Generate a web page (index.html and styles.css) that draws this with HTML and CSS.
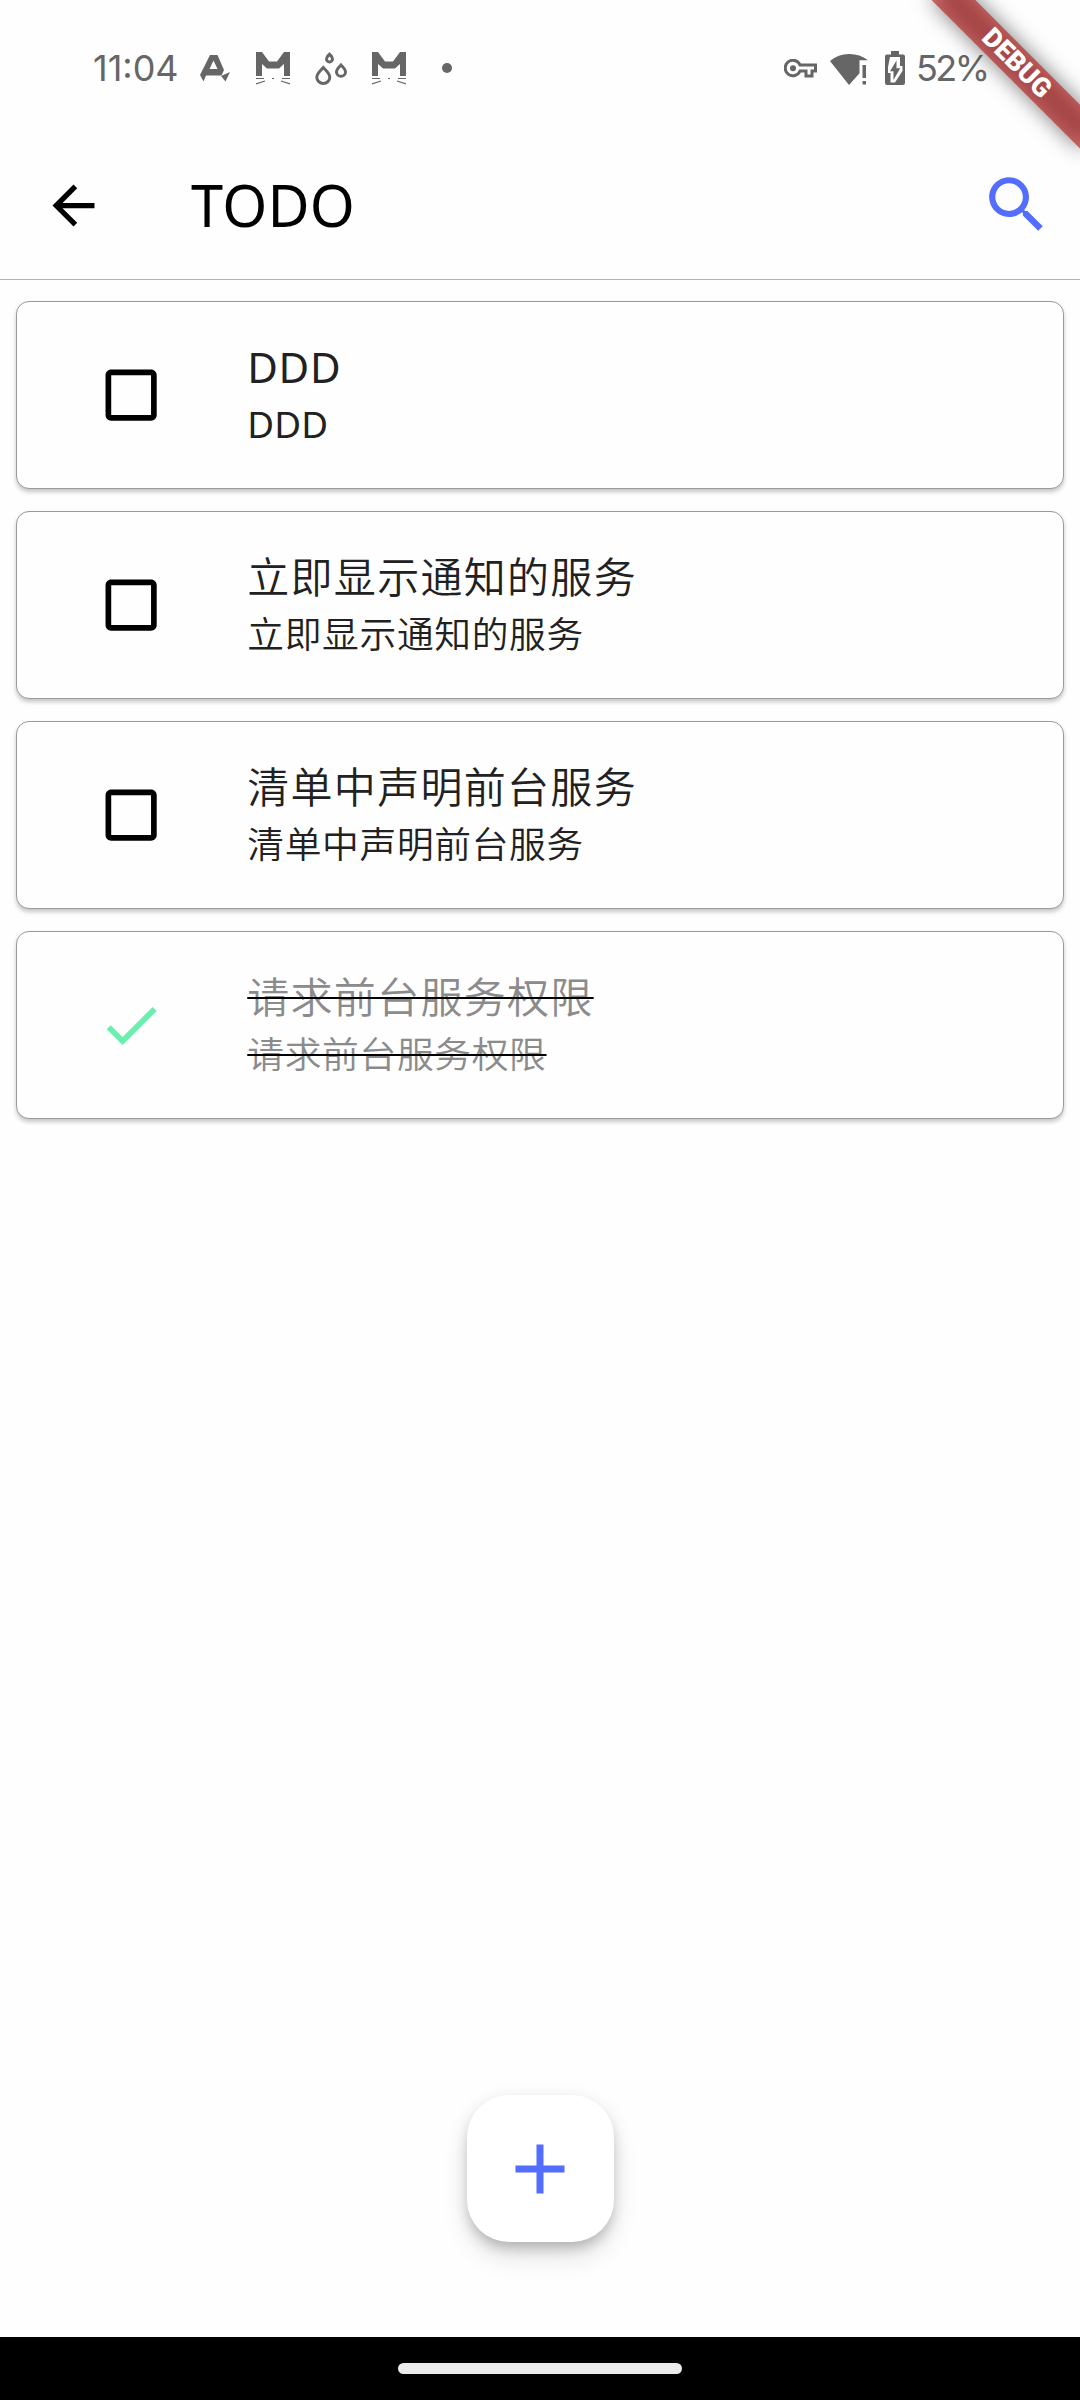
FILE: index.html
```html
<!DOCTYPE html>
<html lang="zh-CN">
<head>
<meta charset="utf-8">
<title>TODO</title>
<link rel="stylesheet" href="styles.css">
</head>
<body>
<svg class="symbols" aria-hidden="true">
  <symbol id="cat" viewBox="0 0 34 33">
    <path d="M0 0h6l7 9.500h8L28 0h6v24h-6V12l-5 4.500H11L6 12v12H0z"/>
    <path d="M0 26.500h8M26 26.500h8M0 32l9-3M34 32l-9-3M16 26.500h2" fill="none" stroke="currentColor" stroke-width="1.2"/>
  </symbol>
  <symbol id="box" viewBox="0 0 24 24">
    <path d="M19 5v14H5V5h14m0-2H5c-1.100 0-2 .9-2 2v14c0 1.100.9 2 2 2h14c1.100 0 2-.9 2-2V5c0-1.100-.9-2-2-2z"/>
  </symbol>
</svg>
<div class="screen">
  <div class="status">
    <div class="status-left">
      <span class="clock">11:04</span>
      <svg class="ic-a" viewBox="0 0 30 27"><path fill-rule="evenodd" d="M10 0h7.500l6.500 15-2.500 5.500H6L3.500 26.500 0 20zM13.500 5.500l-4 8.500h8z"/><path d="M21 21l9-4-4.500 9.500z"/></svg>
      <svg class="ic-cat"><use href="#cat"/></svg>
      <svg class="ic-drops" viewBox="0 0 32 33"><g fill="none" stroke="currentColor" stroke-width="3"><path d="M8.300 15.500C5 19 1.800 21.500 1.800 25.200a6.500 6.200 0 0 0 13 0c0-3.700-3.200-6.200-6.500-9.700z"/><path d="M14.500 2.200c-1.500 1.600-3 2.800-3 4.700a3 3 0 0 0 6 0c0-1.900-1.500-3.100-3-4.700z"/><path d="M26 13c-2.400 2.500-4.500 4.200-4.500 6.900a4.500 4.400 0 0 0 9 0c0-2.700-2.100-4.400-4.500-6.900z"/></g></svg>
      <svg class="ic-cat"><use href="#cat"/></svg>
      <span class="dot"></span>
    </div>
    <div class="status-right">
      <svg class="ic-key" viewBox="0 0 33 19"><path d="M16 6h15.500v6H28v5h-6v-5h-6a7.700 7.700 0 1 1 0-6z" fill="none" stroke="currentColor" stroke-width="3"/><circle cx="9" cy="9.300" r="3"/></svg>
      <svg class="ic-wifi" viewBox="0 0 38 33"><path d="M0 9a31 31 0 0 1 38-.8h-8.500v13L19 33z"/><path d="M32.500 13h3.500v13h-3.500zM32.500 29h3.500v3.500h-3.500z"/></svg>
      <svg class="ic-battery" viewBox="0 0 20 34"><path d="M6 0h8v3.500h4a2 2 0 0 1 2 2V32a2 2 0 0 1-2 2H2a2 2 0 0 1-2-2V5.500a2 2 0 0 1 2-2h4z"/><path fill="#fefefe" d="M5 6h10v9h2.500v5L10 31.500H5.500V22H3v-6z"/><path d="M11.500 9.500v7.800h3.700L8.500 29v-8.700H5z"/></svg>
      <span class="percent">52%</span>
    </div>
  </div>

  <header class="appbar">
    <svg class="ic-back" viewBox="0 0 24 24"><path d="M20 11H7.830l5.590-5.590L12 4l-8 8 8 8 1.410-1.410L7.830 13H20z"/></svg>
    <h1 class="title">TODO</h1>
    <svg class="ic-search" viewBox="0 0 24 24"><path d="M15.500 14h-.79l-.28-.27C15.410 12.590 16 11.110 16 9.500 16 5.910 13.090 3 9.500 3S3 5.910 3 9.500 5.910 16 9.500 16c1.610 0 3.090-.59 4.230-1.570l.27.28v.79l5 4.990L20.490 19zm-6 0C7.010 14 5 11.990 5 9.500S7.010 5 9.500 5 14 7.010 14 9.500 11.990 14 9.500 14z"/></svg>
  </header>

  <main class="list">
    <div class="card">
      <svg class="check"><use href="#box"/></svg>
      <div class="texts latin"><div class="name">DDD</div><div class="note">DDD</div></div>
    </div>
    <div class="card">
      <svg class="check"><use href="#box"/></svg>
      <div class="texts"><div class="name">立即显示通知的服务</div><div class="note">立即显示通知的服务</div></div>
    </div>
    <div class="card">
      <svg class="check"><use href="#box"/></svg>
      <div class="texts"><div class="name">清单中声明前台服务</div><div class="note">清单中声明前台服务</div></div>
    </div>
    <div class="card done">
      <svg class="check" viewBox="0 0 24 24"><path d="M9 16.170L4.830 12l-1.420 1.410L9 19 21 7l-1.410-1.410z"/></svg>
      <div class="texts"><div class="name"><span>请求前台服务权限</span></div><div class="note"><span>请求前台服务权限</span></div></div>
    </div>
  </main>

  <div class="fab"><svg viewBox="0 0 24 24"><path d="M19 13h-6v6h-2v-6H5v-2h6V5h2v6h6z"/></svg></div>
  <div class="navbar"><span class="pill"></span></div>

  <div class="banner"><div class="banner-shadow"></div><div class="banner-band">DEBUG</div></div>
</div>
</body>
</html>
```
FILE: styles.css
```css
* { box-sizing: border-box; }
body { margin: 0; background: #fefefe; font-family: "Noto Sans", "Noto Sans CJK SC", sans-serif; }
svg { display: block; fill: currentColor; flex: none; }
.symbols { position: absolute; width: 0; height: 0; }
.screen { position: relative; width: 1080px; height: 2400px; overflow: hidden; display: flex; flex-direction: column; }

.status { height: 132px; display: flex; justify-content: space-between; padding: 4px 93px 0 92px; color: #666; font-family: Inter, sans-serif; font-size: 36px; }
.status-left, .status-right { display: flex; align-items: center; }
.clock, .percent { padding-bottom: 1px; }
.clock { width: 108px; padding-left: 1px; letter-spacing: 0; }
.ic-a { width: 30px; height: 27px; margin-right: 26px; }
.ic-cat { width: 34px; height: 33px; margin-right: 25px; }
.ic-drops { width: 32px; height: 33px; margin-right: 25px; }
.dot { width: 10px; height: 10px; margin-left: 11px; border-radius: 50%; background: currentColor; }
.ic-key { width: 33px; height: 19px; margin-right: 13px; }
.ic-wifi { width: 38px; height: 33px; margin-right: 17px; }
.ic-battery { width: 20px; height: 34px; margin-right: 11px; }
.percent { width: 71px; white-space: nowrap; letter-spacing: -2.6px; }

.appbar { height: 148px; display: flex; align-items: center; padding: 0 27px 0 42px; border-bottom: 1px solid #b4b4b4; color: #000; }
.ic-back { width: 63px; height: 63px; }
.title { flex: 1; margin: 0 0 0 86px; padding-bottom: 1px; font-size: 57.75px; font-weight: 380; line-height: 74px; letter-spacing: .2px; }
.ic-search { width: 73.5px; height: 73.5px; margin-bottom: 1px; color: #536dfe; }

.list { flex: 1; display: flex; flex-direction: column; gap: 22px; padding: 21px 16px 0; }
.card { height: 188px; display: flex; align-items: center; padding-left: 80px; border: 1px solid #9a9a9a; border-radius: 13px; background: #fefefe; box-shadow: 0 3px 4px rgba(0, 0, 0, .22); }
.check { width: 68.25px; height: 68.25px; color: #000; }
.texts { margin-left: 82px; padding-bottom: 4px; color: #212121; font-weight: 350; }
.name { font-size: 42px; line-height: 63px; letter-spacing: 1.3px; }
.note { font-size: 36.75px; line-height: 52.5px; letter-spacing: .66px; }
.latin { font-weight: 400; }
.latin .name { letter-spacing: .7px; }
.latin .note { letter-spacing: .2px; }
.done .check { color: #69f0ae; }
.done .texts { color: #8b8b8b; }
.done span { text-decoration: line-through #000 2px; }

.fab { align-self: center; width: 147px; height: 147px; margin-bottom: 95px; display: flex; align-items: center; justify-content: center; border-radius: 42px; background: #fff; color: #536dfe; box-shadow: 0 8px 13px -3px rgba(0, 0, 0, .2), 0 16px 26px rgba(0, 0, 0, .1), 0 3px 20px rgba(0, 0, 0, .07); }
.fab svg { width: 84px; height: 84px; }
.navbar { height: 63px; background: #000; display: flex; justify-content: center; align-items: center; }
.pill { width: 284px; height: 11px; border-radius: 6px; background: #ebebeb; }

/* Corner ribbon, laid over the status bar */
.banner { position: absolute; top: 0; left: 1080px; width: 0; height: 0; transform: rotate(45deg); transform-origin: 0 0; }
.banner-shadow, .banner-band { position: absolute; left: -105px; top: 73.5px; width: 210px; height: 31.5px; }
.banner-shadow { background: rgba(0, 0, 0, .5); filter: blur(10.4px); }
.banner-band { background: rgba(183, 28, 28, .627); color: #fff; text-align: center; font: 900 26.8px/31.5px Roboto, sans-serif; }
```
